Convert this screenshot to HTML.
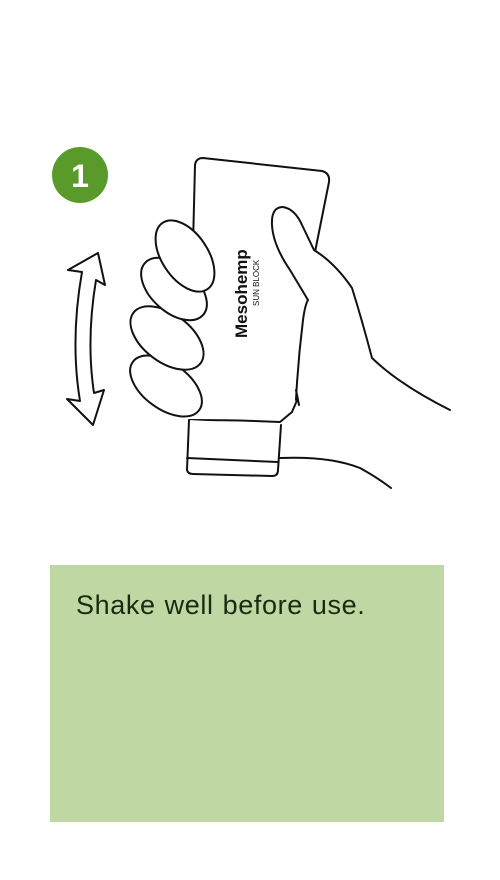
<!DOCTYPE html>
<html><head><meta charset="utf-8"><style>
html,body{margin:0;padding:0;background:#fff;width:500px;height:880px;overflow:hidden}
.box{position:absolute;left:50px;top:565px;width:394px;height:257px;background:#bfd7a2}
.box p{margin:0;position:absolute;left:26px;top:25px;font:27px "Liberation Sans",sans-serif;color:#1a2a12;letter-spacing:0.6px;word-spacing:1px}
</style></head><body>
<svg width="500" height="560" style="position:absolute;left:0;top:0" fill="none" stroke="#111" stroke-width="2" stroke-linejoin="round" stroke-linecap="round">
<circle cx="80" cy="175" r="28" fill="#5a9a2a" stroke="none"/>
<text x="80" y="187" font-family="Liberation Sans,sans-serif" font-weight="bold" font-size="32" fill="#fff" stroke="none" text-anchor="middle">1</text>
<path d="M193,245 L195,165 Q196,158 203,158 L322,171 Q330,173 329,182 L315,252" fill="#fff"/>
<path d="M190,420 L180,300 L193,245 L315,250 L300,410 L282,425 Z" fill="#fff" stroke="none"/>
<path d="M298,398 L292,412 L280,422 Q240,420 190,420"/>
<path d="M189,420 L187,470 Q188,474 193,474 L272,476 Q278,476 278,470 L281,425" fill="#fff"/>
<path d="M187,458 L278,462"/>
<path d="M280,458 Q330,456 360,468 Q378,478 391,488"/>
<path d="M296,400 Q298,360 303,320 Q305,305 308,300 L290,270 Q273,245 272,225 Q271,207 283,207 Q295,209 302,225 L314,250 Q335,263 352,288 Q362,320 372,358 Q400,385 450,410" fill="#fff"/>
<path d="M296,390 L299,405"/>
<ellipse cx="166" cy="386" rx="41" ry="23" transform="rotate(36 166 386)" fill="#fff"/>
<ellipse cx="167" cy="338" rx="42" ry="24" transform="rotate(37 167 338)" fill="#fff"/>
<ellipse cx="174" cy="289" rx="39" ry="23" transform="rotate(42 174 289)" fill="#fff"/>
<ellipse cx="185" cy="256" rx="40" ry="23" transform="rotate(56 185 256)" fill="#fff"/>
<path d="M98,253 L105,285 L96,280 Q86,340 94,393 L104,390 L93,425 L67,399 L80,401 Q70,340 82,272 L68,270 Z" fill="#fff"/>
<text transform="translate(247,338) rotate(-90)" font-family="Liberation Sans,sans-serif" font-weight="bold" font-size="17" fill="#111" stroke="none">Mesohemp</text>
<text transform="translate(259,306) rotate(-90)" font-family="Liberation Sans,sans-serif" font-size="8" fill="#111" stroke="none">SUN BLOCK</text>
</svg>
<div class="box"><p>Shake well before use.</p></div>
</body></html>
